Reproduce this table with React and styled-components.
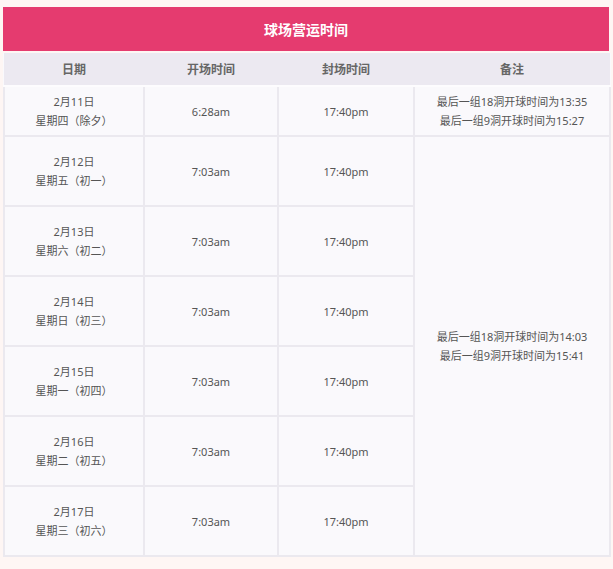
import styled, { createGlobalStyle } from "styled-components";

const GlobalStyle = createGlobalStyle`
  body {
    margin: 0;
    background: #fef6f4;
    font-family: "Noto Sans", "Noto Sans CJK SC", sans-serif;
  }
`;

const Page = styled.div`
  padding: 7px 4px 12px 3px;
`;

const Title = styled.div`
  height: 44px;
  background: #e53b6f;
  color: #fff;
  font-size: 14px;
  font-weight: 700;
  display: flex;
  align-items: center;
  justify-content: center;
  margin-bottom: 2px;
`;

const Table = styled.table`
  width: 606px;
  border-collapse: collapse;
  table-layout: fixed;
  background: #faf9fc;
`;

const Head = styled.th`
  height: 32px;
  padding: 0;
  background: #ece9f1;
  color: #666;
  font-size: 12px;
  font-weight: 700;
  border-bottom: 2px solid #fdfcfe;
`;

const Cell = styled.td`
  height: ${(p) => p.$h || 68}px;
  padding: 0;
  border: 2px solid #ebe9ef;
  color: #555;
  font-size: 11px;
  line-height: 19px;
  text-align: center;
  vertical-align: middle;
`;

const days = [
  { date: "2月12日", week: "星期五（初一）" },
  { date: "2月13日", week: "星期六（初二）" },
  { date: "2月14日", week: "星期日（初三）" },
  { date: "2月15日", week: "星期一（初四）" },
  { date: "2月16日", week: "星期二（初五）" },
  { date: "2月17日", week: "星期三（初六）" },
];

const App = () => {
  return (
    <Page>
      <GlobalStyle />
      <Title>球场营运时间</Title>
      <Table>
        <colgroup>
          <col style={{ width: 140 }} />
          <col style={{ width: 134 }} />
          <col style={{ width: 136 }} />
          <col style={{ width: 196 }} />
        </colgroup>
        <thead>
          <tr>
            <Head>日期</Head>
            <Head>开场时间</Head>
            <Head>封场时间</Head>
            <Head>备注</Head>
          </tr>
        </thead>
        <tbody>
          <tr>
            <Cell $h={48}>
              2月11日
              <br />
              星期四（除夕）
            </Cell>
            <Cell $h={48}>6:28am</Cell>
            <Cell $h={48}>17:40pm</Cell>
            <Cell $h={48}>
              最后一组18洞开球时间为13:35
              <br />
              最后一组9洞开球时间为15:27
            </Cell>
          </tr>
          {days.map((d, i) => (
            <tr key={d.date}>
              <Cell>
                {d.date}
                <br />
                {d.week}
              </Cell>
              <Cell>7:03am</Cell>
              <Cell>17:40pm</Cell>
              {i === 0 && (
                <Cell rowSpan={6}>
                  最后一组18洞开球时间为14:03
                  <br />
                  最后一组9洞开球时间为15:41
                </Cell>
              )}
            </tr>
          ))}
        </tbody>
      </Table>
    </Page>
  );
};

export default App;
